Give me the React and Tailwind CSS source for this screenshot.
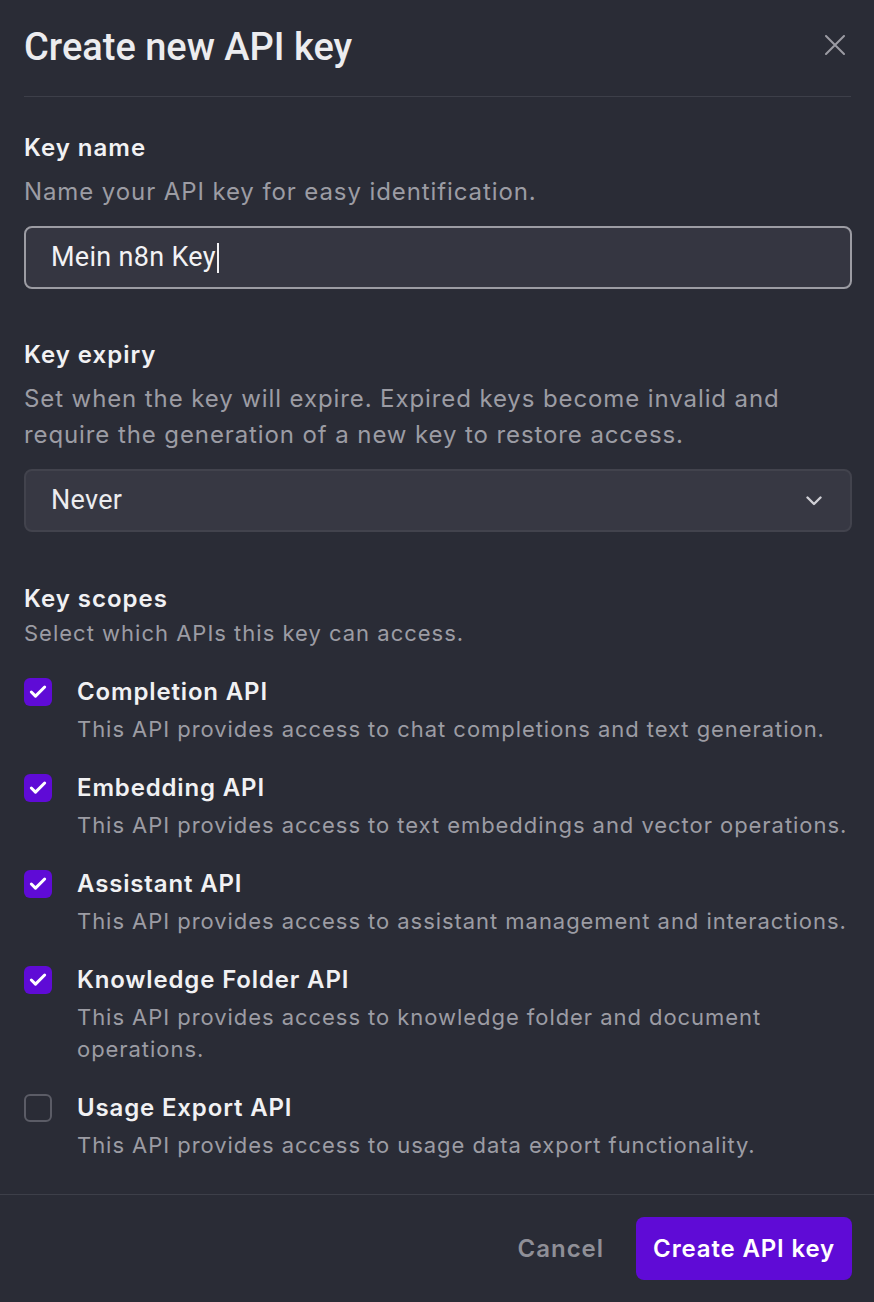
import { Check } from 'lucide-react'

const scopes = [
  { name: 'Completion API', desc: 'This API provides access to chat completions and text generation.', on: true },
  { name: 'Embedding API', desc: 'This API provides access to text embeddings and vector operations.', on: true },
  { name: 'Assistant API', desc: 'This API provides access to assistant management and interactions.', on: true },
  { name: 'Knowledge Folder API', desc: 'This API provides access to knowledge folder and document operations.', on: true },
  { name: 'Usage Export API', desc: 'This API provides access to usage data export functionality.', on: false }
]

const inter = { fontFamily: 'Inter, "Noto Sans", sans-serif' }

const App = () => {
  return (
    <div className="min-h-[1302px] w-[874px] bg-[#2a2c36] text-[#f1f1f3] flex flex-col" style={inter}>
      {/* Header */}
      <div className="pl-6 pr-[23px]">
        <div className="flex items-center justify-between h-[97px] border-b border-[#3d3f49]">
          <h1 className="text-[38px] font-medium text-[#ececef] -mt-[1px] font-['Roboto',sans-serif]">
            Create new API key
          </h1>
          <svg width="20" height="20" viewBox="0 0 20 20" className="-mt-[6px] mr-[6px]" fill="none" stroke="#9b9ba3" strokeWidth="2" strokeLinecap="round">
            <path d="M1 1 19 19M19 1 1 19" />
          </svg>
        </div>
      </div>

      {/* Body */}
      <div className="pl-6 pr-[22px] flex-1">
        <div className="pt-[34px]">
          <div className="text-[24px] font-semibold leading-[34px] tracking-[1px]">Key name</div>
          <div className="text-[24px] text-[#9c9ca4] leading-[36px] tracking-[0.9px] mt-[9px]">Name your API key for easy identification.</div>
          <div className="mt-[16px] h-[63px] rounded-[8px] border-2 border-[#9c9ca3] bg-[#353641] flex items-center px-[25px]">
            <span className="text-[27px] tracking-[0.3px] text-[#f2f2f4] font-['Roboto',sans-serif]">Mein n8n Key</span>
            <span className="w-[2px] h-[30px] bg-[#f2f2f4] ml-[1px]" />
          </div>
        </div>

        <div className="pt-[49px]">
          <div className="text-[24px] font-semibold leading-[34px] tracking-[1px]">Key expiry</div>
          <div className="text-[24px] text-[#9c9ca4] leading-[36px] tracking-[0.9px] mt-[9px]">
            Set when the key will expire. Expired keys become invalid and require the generation of a new key to restore access.
          </div>
          <div className="mt-[16px] h-[63px] rounded-[8px] border-2 border-[#42434d] bg-[#373843] flex items-center justify-between pl-[25px] pr-[28px]">
            <span className="text-[27px] tracking-[0.3px] text-[#ececef] font-['Roboto',sans-serif]">Never</span>
            <svg width="16" height="10" viewBox="0 0 16 10" fill="none" stroke="#cfcfd5" strokeWidth="2.4" strokeLinecap="round" strokeLinejoin="round">
              <path d="M1.5 1.5 8 8 14.5 1.5" />
            </svg>
          </div>
        </div>

        <div className="pt-[50px]">
          <div className="text-[24px] font-semibold leading-[34px] tracking-[1px]">Key scopes</div>
          <div className="text-[22px] text-[#9c9ca4] leading-[34px] tracking-[1px]">Select which APIs this key can access.</div>
          <div className="mt-[26px] mr-[-20px] flex flex-col gap-[27px]">
            {scopes.map((s) => (
              <div key={s.name} className="flex gap-[25px]">
                {s.on ? (
                  <div className="w-[28px] h-[28px] mt-[2px] shrink-0 rounded-[6px] bg-[#5f0bd6] flex items-center justify-center">
                    <Check className="w-[20px] h-[20px] text-white" strokeWidth={3.6} />
                  </div>
                ) : (
                  <div className="w-[28px] h-[28px] mt-[2px] shrink-0 rounded-[6px] border-2 border-[#5b5c66]" />
                )}
                <div>
                  <div className="text-[24px] font-semibold leading-[32px] tracking-[0.85px]">{s.name}</div>
                  <div className="text-[22px] text-[#9c9ca4] leading-[32px] tracking-[0.95px] mt-[5px]">{s.desc}</div>
                </div>
              </div>
            ))}
          </div>
        </div>
      </div>

      {/* Footer */}
      <div className="border-t border-[#3d3f49] h-[108px] pl-6 pr-[22px] flex items-center justify-end gap-[32px]">
        <span className="text-[24px] font-semibold tracking-[1px] text-[#8f8f97]">Cancel</span>
        <button className="h-[63px] px-[17px] rounded-[8px] bg-[#5f0bd6] text-white text-[24px] font-semibold tracking-[0.85px]">
          Create API key
        </button>
      </div>
    </div>
  )
}

export default App
